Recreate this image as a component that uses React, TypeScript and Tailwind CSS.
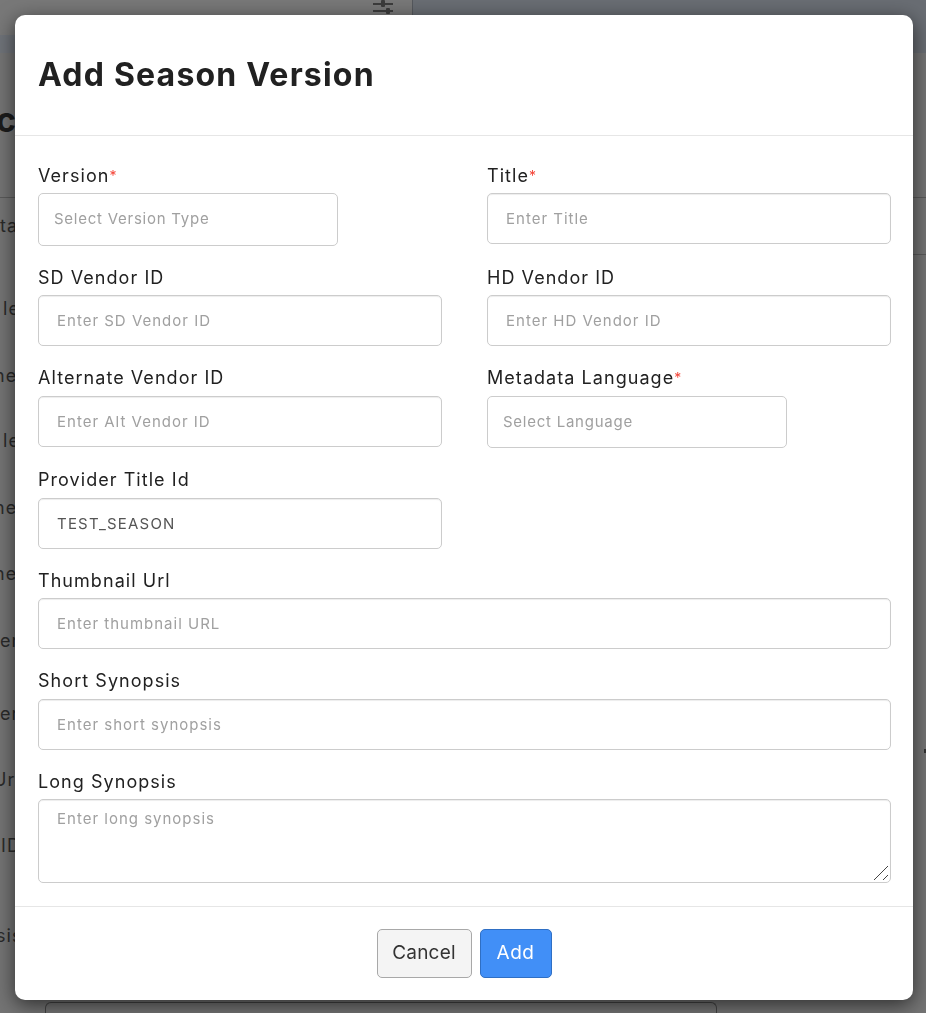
const font = { fontFamily: "Inter, sans-serif" };

const pageRows = [
  { text: "ta", className: "mt-[17px]" },
  { text: "le", className: "mt-[61px] pl-[3px]" },
  { text: "ne", className: "mt-[45px] -ml-[6px]" },
  { text: "le", className: "mt-[43px] pl-[3px]" },
  { text: "ne", className: "mt-[45px] -ml-[6px]" },
  { text: "ne", className: "mt-[44px] -ml-[6px]" },
  { text: "er", className: "mt-[45px]" },
  { text: "er", className: "mt-[51px]" },
  { text: "Url", className: "mt-[44px] -ml-[7px]" },
  { text: "ID", className: "mt-[44px] pl-[1px]" },
  { text: "sis", className: "mt-[68px] -ml-[4px]" },
];

function Label({ text, required }: { text: string; required?: boolean }) {
  return (
    <label className="block text-[18px] leading-[22px] tracking-[1.05px] text-[#212121]">
      {text}
      {required && <span className="text-[#f44336] text-[14px] align-top">*</span>}
    </label>
  );
}

function Field({
  label,
  placeholder,
  value,
  required,
}: {
  label: string;
  placeholder?: string;
  value?: string;
  required?: boolean;
}) {
  return (
    <div className="flex flex-col gap-[6.7px]">
      <Label text={label} required={required} />
      <input
        readOnly
        placeholder={placeholder}
        value={value ?? ""}
        className={
          "w-full h-[51px] border border-[#cccccc] rounded-[5px] px-[18px] text-[15px] text-[#555555] placeholder:text-[#a0a0a0] outline-none bg-white shadow-[inset_0_1px_1px_rgba(0,0,0,0.075)] " +
          (value ? "tracking-[1.2px]" : "tracking-[1px]")
        }
      />
    </div>
  );
}

function SelectField({ label, placeholder }: { label: string; placeholder: string }) {
  return (
    <div className="flex flex-col gap-[6.7px]">
      <Label text={label} required />
      <div className="w-[300px] h-[52.7px] mb-[0.3px] border border-[#cccccc] rounded-[5px] pl-[15px] flex items-center text-[15px] tracking-[0.75px] text-[#a0a0a0]">
        {placeholder}
      </div>
    </div>
  );
}

function PageBehind() {
  return (
    <div className="flex flex-col h-full">
      <div className="flex h-[53px]">
        <div className="w-[412px] flex flex-col">
          <div className="h-[35px] bg-[#787878] flex justify-end pr-[18px]">
            <svg width="22" height="16" viewBox="0 0 22 16" className="text-[#3c3c3c]" fill="currentColor">
              <rect x="1" y="3" width="20" height="2" />
              <rect x="1" y="10" width="20" height="2" />
              <rect x="9" y="0" width="4" height="7" rx="1" />
              <rect x="14" y="8" width="4" height="6" rx="1" />
            </svg>
          </div>
          <div className="h-[18px] bg-[#6f7379]" />
        </div>
        <div className="flex-1 bg-[#696d73] border-l border-[#55585d]" />
      </div>
      <div className="h-[145px] border-b border-[#5a5a5a] overflow-hidden pt-[47px]">
        <div className="text-[34px] leading-[40px] font-bold text-[#1c1c1c] -ml-[4px]">c</div>
      </div>
      <div className="h-[804px] flex justify-between">
        <div className="w-[40px] overflow-hidden text-[18px] leading-[22px] tracking-[1.05px] text-[#2a2a2a]">
          {pageRows.map((row, i) => (
            <div key={i} className={row.className}>
              {row.text}
            </div>
          ))}
        </div>
        <div className="w-[40px] flex flex-col items-end">
          <div className="w-full h-[57px] border-b border-[#5a5a5a]" />
          <div className="mt-[494px] w-[2px] h-[4px] bg-[#333333]" />
        </div>
      </div>
      <div className="ml-[45px] w-[672px] flex-1 border-t border-x border-[#444444] rounded-t-[6px]" />
    </div>
  );
}

export default function App() {
  return (
    <div className="relative w-[926px] h-[1013px] overflow-hidden bg-[#747474]" style={font}>
      <PageBehind />
      <div className="fixed inset-0 flex items-start justify-start pt-[15px] pl-[15px]">
        <div className="w-[898px] h-[985px] bg-white rounded-[10px] shadow-[0_5px_20px_rgba(0,0,0,0.6)] flex flex-col">
          <div className="h-[121px] border-b border-[#e6e6e6] px-[23px] pt-[38px]">
            <h1 className="text-[32px] leading-[44px] font-bold tracking-[1.2px] text-[#212121]">
              Add Season Version
            </h1>
          </div>
          <div className="flex-1 pl-[23px] pr-[22px] pt-[28.5px]">
            <div className="grid grid-cols-[404px_404px] gap-x-[45px] gap-y-[20.57px]">
              <SelectField label="Version" placeholder="Select Version Type" />
              <Field label="Title" placeholder="Enter Title" required />
              <Field label="SD Vendor ID" placeholder="Enter SD Vendor ID" />
              <Field label="HD Vendor ID" placeholder="Enter HD Vendor ID" />
              <Field label="Alternate Vendor ID" placeholder="Enter Alt Vendor ID" />
              <SelectField label="Metadata Language" placeholder="Select Language" />
              <Field label="Provider Title Id" value="TEST_SEASON" />
            </div>
            <div className="flex flex-col gap-[20.6px] mt-[20.8px]">
              <Field label="Thumbnail Url" placeholder="Enter thumbnail URL" />
              <Field label="Short Synopsis" placeholder="Enter short synopsis" />
              <div className="flex flex-col gap-[6.1px] mt-[0.6px]">
                <Label text="Long Synopsis" />
                <div className="relative">
                  <textarea
                    readOnly
                    placeholder="Enter long synopsis"
                    className="w-full h-[84px] border border-[#cccccc] rounded-[5px] px-[18px] py-[8px] text-[15px] tracking-[1px] placeholder:text-[#a0a0a0] outline-none bg-white block resize-none shadow-[inset_0_1px_1px_rgba(0,0,0,0.075)]"
                  />
                  <svg
                    width="16"
                    height="16"
                    viewBox="0 0 16 16"
                    className="absolute right-[2px] bottom-[2px] text-[#444444]"
                    stroke="currentColor"
                    strokeWidth="1"
                    fill="none"
                  >
                    <path d="M1 15 15 1" />
                    <path d="M10 15 15 10" />
                  </svg>
                </div>
              </div>
            </div>
          </div>
          <div className="h-[94px] border-t border-[#e6e6e6] flex justify-center gap-[8px] pt-[22px]">
            <button className="w-[95px] h-[49px] bg-[#f4f4f4] border border-[#a8a8a8] rounded-[5px] text-[19px] tracking-[0.2px] text-[#333333]">
              Cancel
            </button>
            <button className="w-[72px] h-[49px] bg-[#418ff7] border border-[#2f6fc4] rounded-[5px] text-[19px] tracking-[0.5px] text-white">
              Add
            </button>
          </div>
        </div>
      </div>
    </div>
  );
}
